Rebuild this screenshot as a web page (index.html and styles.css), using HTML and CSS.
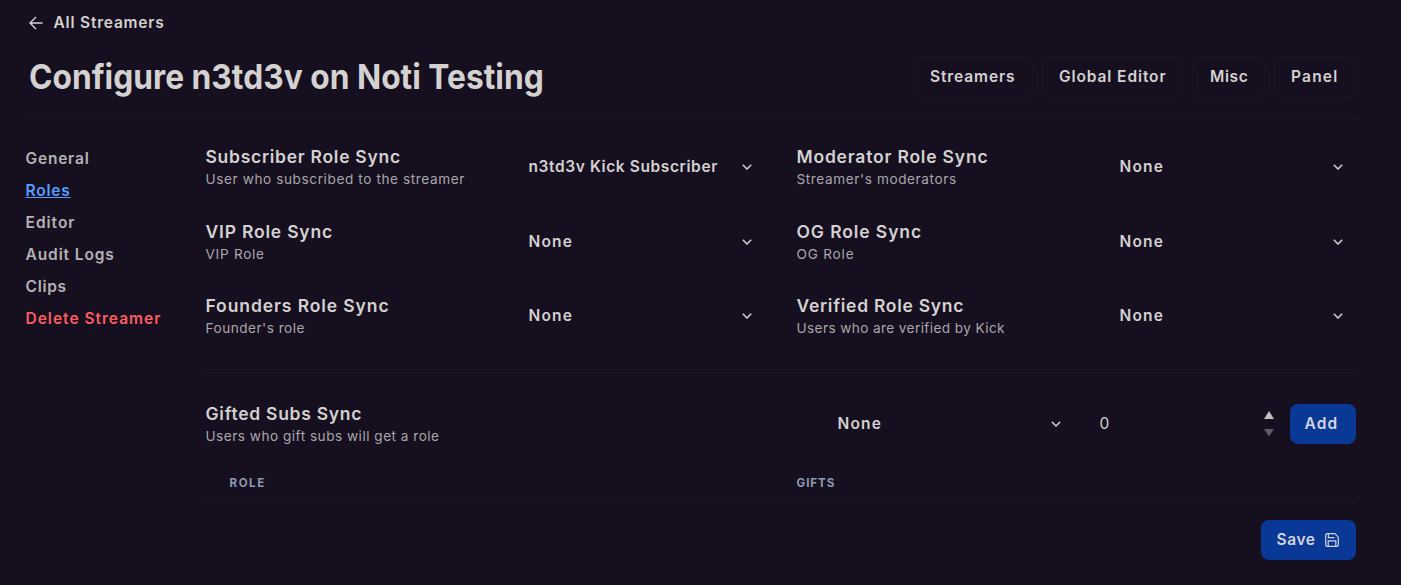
FILE: index.html
```html
<!DOCTYPE html>
<html lang="en">
<head>
<meta charset="utf-8">
<title>Configure n3td3v on Noti Testing</title>
<link rel="stylesheet" href="styles.css">
</head>
<body>
<svg class="sprite" aria-hidden="true">
  <symbol id="chevron" viewBox="0 0 10 6"><path d="M.8.8 5 5 9.2.8" fill="none" stroke="currentColor" stroke-width="1.5"/></symbol>
</svg>
<header class="header">
  <a class="back" href="#">
    <svg class="back-icon" viewBox="0 0 14 14"><path d="M13.5 7H1M7 1 1 7l6 6" fill="none" stroke="currentColor" stroke-width="1.4"/></svg>
    <span class="ls-8">All Streamers</span>
  </a>
  <div class="title-row">
    <h1 class="title">Configure n3td3v on Noti Testing</h1>
    <nav class="nav">
      <a class="nav-item streamers ls-9" href="#">Streamers</a>
      <a class="nav-item editor ls-9" href="#">Global Editor</a>
      <a class="nav-item misc ls-6" href="#">Misc</a>
      <a class="nav-item panel ls-12" href="#">Panel</a>
    </nav>
  </div>
</header>
<div class="layout">
  <aside class="sidebar">
    <a class="ls-8" href="#">General</a>
    <a class="ls-8 active" href="#">Roles</a>
    <a class="ls-10" href="#">Editor</a>
    <a class="ls-9" href="#">Audit Logs</a>
    <a class="ls-7" href="#">Clips</a>
    <a class="ls-10 danger" href="#">Delete Streamer</a>
  </aside>
  <main class="main">
    <section class="roles">
      <div class="role">
        <div class="label"><h2 class="ls-7">Subscriber Role Sync</h2><p class="ls-6">User who subscribed to the streamer</p></div>
        <div class="select"><span class="ls-6">n3td3v Kick Subscriber</span><svg class="chevron"><use href="#chevron"/></svg></div>
      </div>
      <div class="role">
        <div class="label"><h2 class="ls-8">Moderator Role Sync</h2><p class="ls-6">Streamer's moderators</p></div>
        <div class="select"><span class="ls-12">None</span><svg class="chevron"><use href="#chevron"/></svg></div>
      </div>
      <div class="role">
        <div class="label"><h2 class="ls-8">VIP Role Sync</h2><p class="ls-7">VIP Role</p></div>
        <div class="select"><span class="ls-12">None</span><svg class="chevron"><use href="#chevron"/></svg></div>
      </div>
      <div class="role">
        <div class="label"><h2 class="ls-9">OG Role Sync</h2><p class="ls-8">OG Role</p></div>
        <div class="select"><span class="ls-12">None</span><svg class="chevron"><use href="#chevron"/></svg></div>
      </div>
      <div class="role">
        <div class="label"><h2 class="ls-9">Founders Role Sync</h2><p class="ls-5">Founder's role</p></div>
        <div class="select"><span class="ls-12">None</span><svg class="chevron"><use href="#chevron"/></svg></div>
      </div>
      <div class="role">
        <div class="label"><h2 class="ls-7">Verified Role Sync</h2><p class="ls-4">Users who are verified by Kick</p></div>
        <div class="select"><span class="ls-12">None</span><svg class="chevron"><use href="#chevron"/></svg></div>
      </div>
    </section>
    <section class="gifts">
      <div class="label"><h2 class="ls-7">Gifted Subs Sync</h2><p class="ls-5">Users who gift subs will get a role</p></div>
      <div class="select"><span class="ls-12">None</span><svg class="chevron"><use href="#chevron"/></svg></div>
      <div class="number">
        <span>0</span>
        <svg class="stepper" viewBox="0 0 10 26"><path d="M5 0 10 8H0z"/><path class="dim" d="M0 18h10l-5 7.5z"/></svg>
      </div>
      <button class="button add ls-12">Add</button>
    </section>
    <div class="table-head"><span class="ls-16">ROLE</span><span class="ls-10">GIFTS</span></div>
    <div class="actions">
      <button class="button save"><span class="ls-6">Save</span>
        <svg class="save-icon" viewBox="0 0 14 14"><path d="M2 .7h7.8l3.5 3.5V12A1.3 1.3 0 0 1 12 13.3H2A1.3 1.3 0 0 1 .7 12V2A1.3 1.3 0 0 1 2 .7zM3.4.9v3.7h6M3.2 13.1V7.8h7.6v5.3" fill="none" stroke="currentColor" stroke-width="1.2"/></svg>
      </button>
    </div>
  </main>
</div>
</body>
</html>
```

FILE: styles.css
```css
* { box-sizing: border-box; }
body {
  margin: 0;
  height: 585px;
  overflow: hidden;
  background: #160f1f;
  color: #d4d1d1;
  font: 600 15.5px/24px Inter, "Open Sans", sans-serif;
}
a { color: inherit; text-decoration: none; }
h1, h2, p { margin: 0; }
.sprite { display: block; width: 0; height: 0; }

.header {
  height: 119px;
  margin: 0 45px 0 29px;
  padding-top: 10px;
  border-bottom: 1px solid #1a1423;
}
.back { display: flex; align-items: center; gap: 10.5px; height: 25px; }
.back-icon { width: 14px; height: 14px; }
.title-row { display: flex; justify-content: space-between; align-items: center; height: 40px; margin-top: 22px; }
.title {
  font: 700 34.5px/40px Inter, sans-serif;
  transform: scaleX(.92);
  transform-origin: left center;
  white-space: nowrap;
}
.nav { display: flex; gap: 9.5px; }
.nav-item { height: 40px; padding-left: 16px; border: 1px solid #19121f; border-radius: 8px; line-height: 37px; }
.streamers { width: 119.5px; }
.editor { width: 140.5px; }
.misc { width: 72.5px; padding-left: 17px; }
.panel { width: 82px; }

.layout { display: flex; padding: 26px 45.5px 0 25.5px; }
.sidebar { display: flex; flex-direction: column; gap: 8px; width: 180px; padding-top: 2px; color: #b5b2b5; }
.active { color: #559eff; text-decoration: underline; }
.danger { color: #fb5c60; }
.main { flex: 1; }

.roles {
  display: grid;
  grid-template-columns: 1fr 1fr;
  gap: 30.5px 32px;
  height: 227.5px;
  align-content: start;
  border-bottom: 1px solid #1a1423;
}
.role { display: flex; }
.role .label { width: 323px; }
.label h2 { font-size: 17.5px; font-weight: 600; line-height: 24px; }
.label p { font-size: 13.6px; font-weight: 400; line-height: 20px; color: #a9a6ab; }
.select { flex: 1; display: flex; justify-content: space-between; align-items: center; padding-right: 12.5px; }
.chevron { width: 10px; height: 6px; }

.gifts { display: flex; align-items: center; height: 44px; margin-top: 29.5px; }
.gifts .label { width: 632px; }
.gifts .select { flex: none; width: 235px; padding-right: 12px; }
.number { flex: 1; display: flex; justify-content: space-between; align-items: center; padding: 0 16px 0 27px; font-weight: 400; }
.stepper { width: 10px; height: 26px; fill: #c3c0c1; }
.dim { opacity: .42; }

.button {
  height: 40px;
  padding: 0 15px;
  border: 0;
  border-radius: 8px;
  background: #0a3896;
  color: #d4d5de;
  font: inherit;
  text-align: left;
}
.add { width: 66px; }
.save { display: flex; align-items: center; justify-content: space-between; width: 95px; padding: 0 17px 0 16px; }
.save-icon { width: 14px; height: 14px; }

.table-head {
  display: grid;
  grid-template-columns: 567px 1fr;
  height: 58px;
  padding: 25px 0 0 24px;
  border-bottom: 1px solid #1a1423;
  color: #8f9ab2;
  font-size: 11.5px;
  font-weight: 700;
}
.actions { display: flex; justify-content: flex-end; padding-top: 16px; }

.ls-4 { letter-spacing: .4px; }
.ls-5 { letter-spacing: .5px; }
.ls-6 { letter-spacing: .6px; }
.ls-7 { letter-spacing: .72px; }
.ls-8 { letter-spacing: .8px; }
.ls-9 { letter-spacing: .9px; }
.ls-10 { letter-spacing: 1px; }
.ls-12 { letter-spacing: 1.2px; }
.ls-16 { letter-spacing: 1.6px; }
.button.ls-12 { letter-spacing: 1.2px; }
```
